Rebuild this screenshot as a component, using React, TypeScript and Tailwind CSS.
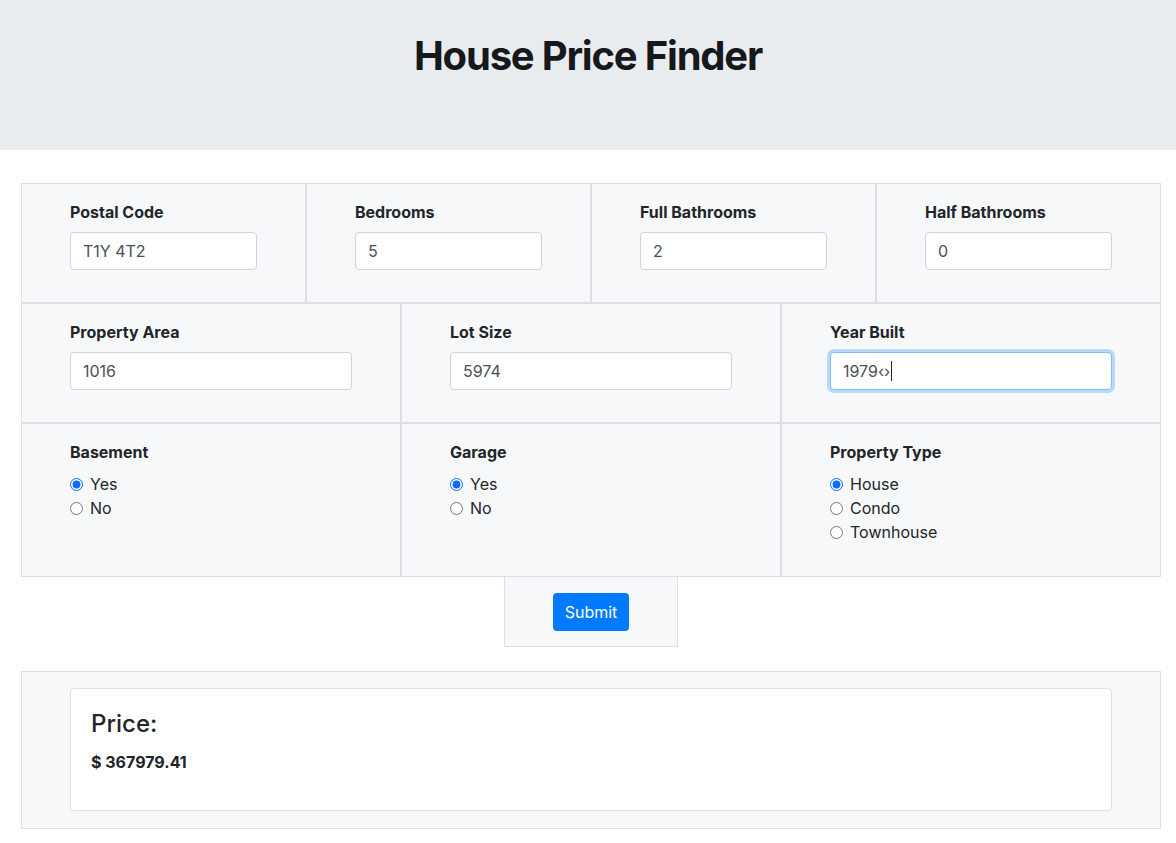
const font = { fontFamily: 'Inter, "Liberation Sans", sans-serif' };

const TextField = ({ label, value }: { label: string; value: string }) => (
  <div className="flex-1 border border-[#dcdfe4] bg-[#f7f8fa] px-12 pt-4 pb-8">
    <label className="mb-2 block text-[16px] font-bold leading-6 text-[#212529]">{label}</label>
    <input
      type="text"
      defaultValue={value}
      className="block h-[38px] w-full rounded border border-[#ced4da] bg-white px-3 text-[16px] text-[#495057] outline-none"
    />
  </div>
);

const RadioField = ({
  label,
  name,
  options,
}: {
  label: string;
  name: string;
  options: string[];
}) => (
  <div className="flex-1 border border-[#dcdfe4] bg-[#f7f8fa] px-12 pt-4 pb-8">
    <label className="mb-2 block text-[16px] font-bold leading-6 text-[#212529]">{label}</label>
    {options.map((o, i) => (
      <label key={o} className="flex h-6 items-center gap-[7px] text-[16px] text-[#212529]">
        <input type="radio" name={name} defaultChecked={i === 0} className="m-0 h-[13px] w-[13px] accent-[#0a6cff]" />
        {o}
      </label>
    ))}
  </div>
);

export default function App() {
  return (
    <div style={font} className="min-h-screen bg-white text-[#212529]">
      <header className="h-[150px] bg-[#e9ecef] pt-8">
        <h1 className="text-center text-[40px] font-bold leading-[48px] tracking-[-1.2px] text-[#16191c]">House Price Finder</h1>
      </header>

      <form className="ml-[21px] mt-[33px] w-[1140px]" onSubmit={(e) => e.preventDefault()}>
        <div className="flex">
          <TextField label="Postal Code" value="T1Y 4T2" />
          <TextField label="Bedrooms" value="5" />
          <TextField label="Full Bathrooms" value="2" />
          <TextField label="Half Bathrooms" value="0" />
        </div>
        <div className="flex">
          <TextField label="Property Area" value="1016" />
          <TextField label="Lot Size" value="5974" />
          <div className="flex-1 border border-[#dcdfe4] bg-[#f7f8fa] px-12 pt-4 pb-8">
            <label className="mb-2 block text-[16px] font-bold leading-6 text-[#212529]">Year Built</label>
            <div className="flex h-[38px] w-full items-center rounded border border-[#80bdff] bg-white px-3 text-[16px] text-[#495057] shadow-[0_0_0_3px_rgba(0,123,255,0.25)]">
              1979‹›
              <span className="ml-px inline-block h-[20px] w-px bg-[#212529]" />
            </div>
          </div>
        </div>
        <div className="flex">
          <RadioField label="Basement" name="basement" options={['Yes', 'No']} />
          <RadioField label="Garage" name="garage" options={['Yes', 'No']} />
          <RadioField label="Property Type" name="type" options={['House', 'Condo', 'Townhouse']} />
        </div>
        <div className="flex justify-center">
          <div className="border border-t-0 border-[#dcdfe4] bg-[#f7f8fa] px-12 pt-4 pb-[15px]">
            <button type="submit" className="h-[38px] rounded bg-[#007bff] px-3 text-[16px] text-white">
              Submit
            </button>
          </div>
        </div>
      </form>

      <section className="ml-[21px] mt-6 w-[1140px] border border-[#dcdfe4] bg-[#f7f8fa] px-12 pt-4 pb-[17px]">
        <div className="rounded border border-[#dfe1e5] bg-white p-5">
          <h4 className="mb-3 text-[24px] font-medium leading-[29px]">Price:</h4>
          <p className="mb-4 text-[16px] font-bold leading-6">$ 367979.41</p>
        </div>
      </section>
    </div>
  );
}
